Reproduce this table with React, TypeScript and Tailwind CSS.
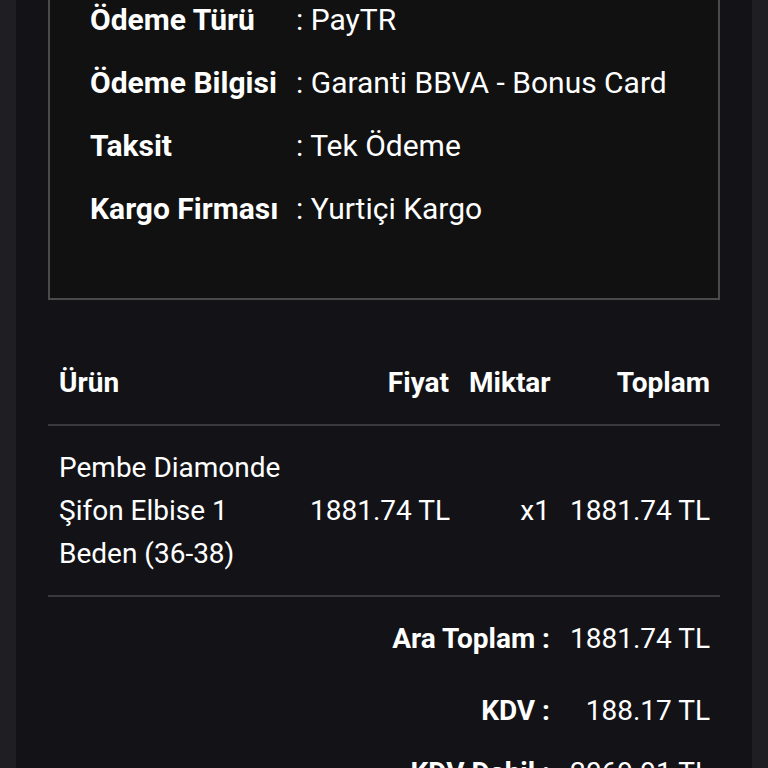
import React from "react";

const info = [
  ["Ödeme Türü", "PayTR"],
  ["Ödeme Bilgisi", "Garanti BBVA - Bonus Card"],
  ["Taksit", "Tek Ödeme"],
  ["Kargo Firması", "Yurtiçi Kargo"],
];

const totals = [
  ["Ara Toplam :", "1881.74 TL", "h-[72px]"],
  ["KDV :", "188.17 TL", "h-[72px]"],
  ["KDV Dahil :", "2069.91 TL", "h-[52px]"],
];

export default function App() {
  return (
    <div
      className="h-[768px] w-[768px] overflow-hidden bg-[#1f1e23] px-4 text-white"
      style={{ fontFamily: "Roboto, 'Noto Sans', sans-serif" }}
    >
      <div className="flex min-h-[900px] flex-col bg-[#131317] px-8 text-[28px] leading-[43px]">
        <div className="-mt-[54px] border-2 border-[#4a4a4a] bg-[#111111] px-10 pt-10 pb-[58px] text-[30px]">
          {info.map(([k, v]) => (
            <div key={k} className="flex py-[10px]">
              <div className="w-[206px] shrink-0 font-bold">{k}</div>
              <div className="whitespace-nowrap">: {v}</div>
            </div>
          ))}
        </div>

        <div className="mt-[41px]">
          <div className="grid grid-cols-[252px_159px_101px_160px] border-b-2 border-[#3a3a3e] font-bold">
            <div className="px-[11px] py-5">Ürün</div>
            <div className="px-[10px] py-5 text-right">Fiyat</div>
            <div className="px-[10px] py-5 text-right">Miktar</div>
            <div className="px-[10px] py-5 text-right">Toplam</div>
          </div>
          <div className="grid grid-cols-[252px_159px_101px_160px] items-center border-b-2 border-[#3a3a3e]">
            <div className="px-[11px] py-5">Pembe Diamonde Şifon Elbise 1 Beden (36-38)</div>
            <div className="whitespace-nowrap px-[10px] py-5 text-right">1881.74 TL</div>
            <div className="whitespace-nowrap px-[10px] py-5 text-right">x1</div>
            <div className="whitespace-nowrap px-[10px] py-5 text-right">1881.74 TL</div>
          </div>
          <div className="pt-[5px]">
            {totals.map(([k, v, h]) => (
              <div key={k} className={`grid grid-cols-[512px_160px] items-center ${h}`}>
                <div className="px-[10px] text-right font-bold">{k}</div>
                <div className="whitespace-nowrap px-[10px] text-right">{v}</div>
              </div>
            ))}
          </div>
        </div>
      </div>
    </div>
  );
}
